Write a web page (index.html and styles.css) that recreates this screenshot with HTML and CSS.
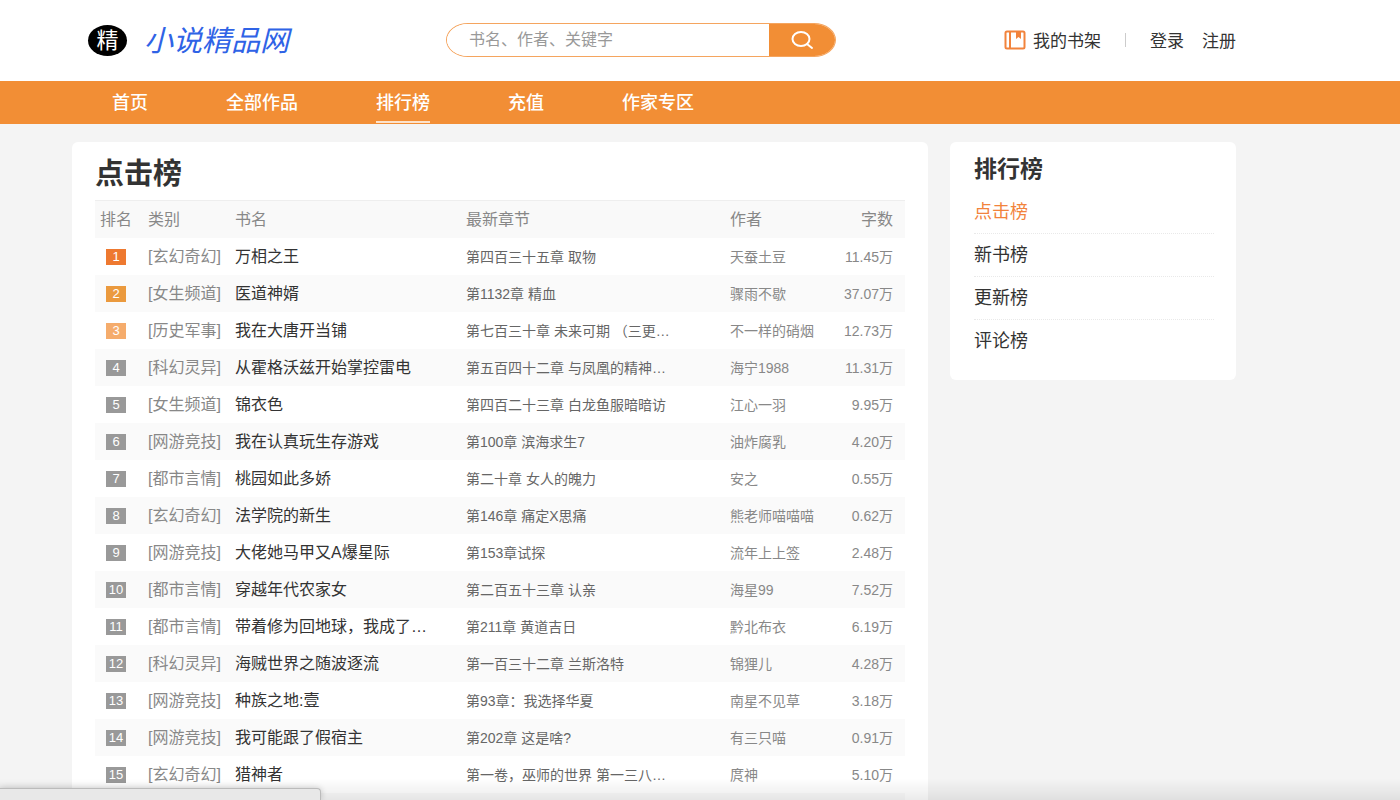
FILE: index.html
```html
<!DOCTYPE html>
<html lang="zh-CN">
<head>
    <meta charset="utf-8">
    <title>点击榜 - 小说精品网</title>
    <link rel="stylesheet" href="styles.css">
</head>
<body>
    <header class="header wrap">
        <a class="logo" href="#">
            <span class="logo-mark">精</span>
            <span class="logo-name">小说精品网</span>
        </a>
        <form class="search">
            <input type="text" name="keyword" placeholder="书名、作者、关键字" aria-label="书名、作者、关键字">
            <button type="submit" aria-label="搜索">
                <svg width="24" height="20" viewBox="0 0 24 20" fill="none" stroke="#fff" stroke-width="2" stroke-linecap="round">
                    <ellipse cx="11" cy="9" rx="8.5" ry="7"/>
                    <path d="M17 14l5 4"/>
                </svg>
            </button>
        </form>
        <div class="user">
            <a class="shelf" href="#">
                <svg width="22" height="20" viewBox="0 0 22 20">
                    <rect x="1.500" y="1.500" width="19" height="17" rx="1.500" fill="none" stroke="#f2833c" stroke-width="2"/>
                    <path d="M6 2v16" stroke="#f2833c" stroke-width="2"/>
                    <path d="M12 1h5v8l-2.500-2-2.500 2z" fill="#f2833c"/>
                </svg>
                我的书架
            </a>
            <span class="line"></span>
            <a href="#">登录</a>
            <a href="#">注册</a>
        </div>
    </header>

    <nav class="nav">
        <div class="nav-list wrap">
            <a href="#">首页</a>
            <a href="#">全部作品</a>
            <a class="on" href="#">排行榜</a>
            <a href="#">充值</a>
            <a href="#">作家专区</a>
        </div>
    </nav>

    <main class="content wrap">
        <section class="card rank">
            <h1>点击榜</h1>
            <table>
                <thead>
                    <tr>
                        <th class="num">排名</th>
                        <th class="cat">类别</th>
                        <th class="name">书名</th>
                        <th class="chapter">最新章节</th>
                        <th class="author">作者</th>
                        <th class="words">字数</th>
                    </tr>
                </thead>
                <tbody>
                    <tr><td class="num"><i class="n1">1</i></td><td class="cat"><a href="#">[玄幻奇幻]</a></td><td class="name"><a href="#">万相之王</a></td><td class="chapter"><a href="#">第四百三十五章 取物</a></td><td class="author"><a href="#">天蚕土豆</a></td><td class="words">11.45万</td></tr>
                    <tr><td class="num"><i class="n2">2</i></td><td class="cat"><a href="#">[女生频道]</a></td><td class="name"><a href="#">医道神婿</a></td><td class="chapter"><a href="#">第1132章 精血</a></td><td class="author"><a href="#">骤雨不歇</a></td><td class="words">37.07万</td></tr>
                    <tr><td class="num"><i class="n3">3</i></td><td class="cat"><a href="#">[历史军事]</a></td><td class="name"><a href="#">我在大唐开当铺</a></td><td class="chapter"><a href="#">第七百三十章 未来可期 （三更…</a></td><td class="author"><a href="#">不一样的硝烟</a></td><td class="words">12.73万</td></tr>
                    <tr><td class="num"><i>4</i></td><td class="cat"><a href="#">[科幻灵异]</a></td><td class="name"><a href="#">从霍格沃兹开始掌控雷电</a></td><td class="chapter"><a href="#">第五百四十二章 与凤凰的精神…</a></td><td class="author"><a href="#">海宁1988</a></td><td class="words">11.31万</td></tr>
                    <tr><td class="num"><i>5</i></td><td class="cat"><a href="#">[女生频道]</a></td><td class="name"><a href="#">锦衣色</a></td><td class="chapter"><a href="#">第四百二十三章 白龙鱼服暗暗访</a></td><td class="author"><a href="#">江心一羽</a></td><td class="words">9.95万</td></tr>
                    <tr><td class="num"><i>6</i></td><td class="cat"><a href="#">[网游竞技]</a></td><td class="name"><a href="#">我在认真玩生存游戏</a></td><td class="chapter"><a href="#">第100章 滨海求生7</a></td><td class="author"><a href="#">油炸腐乳</a></td><td class="words">4.20万</td></tr>
                    <tr><td class="num"><i>7</i></td><td class="cat"><a href="#">[都市言情]</a></td><td class="name"><a href="#">桃园如此多娇</a></td><td class="chapter"><a href="#">第二十章 女人的魄力</a></td><td class="author"><a href="#">安之</a></td><td class="words">0.55万</td></tr>
                    <tr><td class="num"><i>8</i></td><td class="cat"><a href="#">[玄幻奇幻]</a></td><td class="name"><a href="#">法学院的新生</a></td><td class="chapter"><a href="#">第146章 痛定X思痛</a></td><td class="author"><a href="#">熊老师喵喵喵</a></td><td class="words">0.62万</td></tr>
                    <tr><td class="num"><i>9</i></td><td class="cat"><a href="#">[网游竞技]</a></td><td class="name"><a href="#">大佬她马甲又A爆星际</a></td><td class="chapter"><a href="#">第153章试探</a></td><td class="author"><a href="#">流年上上签</a></td><td class="words">2.48万</td></tr>
                    <tr><td class="num"><i>10</i></td><td class="cat"><a href="#">[都市言情]</a></td><td class="name"><a href="#">穿越年代农家女</a></td><td class="chapter"><a href="#">第二百五十三章 认亲</a></td><td class="author"><a href="#">海星99</a></td><td class="words">7.52万</td></tr>
                    <tr><td class="num"><i>11</i></td><td class="cat"><a href="#">[都市言情]</a></td><td class="name"><a href="#">带着修为回地球，我成了…</a></td><td class="chapter"><a href="#">第211章 黄道吉日</a></td><td class="author"><a href="#">黔北布衣</a></td><td class="words">6.19万</td></tr>
                    <tr><td class="num"><i>12</i></td><td class="cat"><a href="#">[科幻灵异]</a></td><td class="name"><a href="#">海贼世界之随波逐流</a></td><td class="chapter"><a href="#">第一百三十二章 兰斯洛特</a></td><td class="author"><a href="#">锦狸儿</a></td><td class="words">4.28万</td></tr>
                    <tr><td class="num"><i>13</i></td><td class="cat"><a href="#">[网游竞技]</a></td><td class="name"><a href="#">种族之地:壹</a></td><td class="chapter"><a href="#">第93章：我选择华夏</a></td><td class="author"><a href="#">南星不见草</a></td><td class="words">3.18万</td></tr>
                    <tr><td class="num"><i>14</i></td><td class="cat"><a href="#">[网游竞技]</a></td><td class="name"><a href="#">我可能跟了假宿主</a></td><td class="chapter"><a href="#">第202章 这是啥?</a></td><td class="author"><a href="#">有三只喵</a></td><td class="words">0.91万</td></tr>
                    <tr><td class="num"><i>15</i></td><td class="cat"><a href="#">[玄幻奇幻]</a></td><td class="name"><a href="#">猎神者</a></td><td class="chapter"><a href="#">第一卷，巫师的世界 第一三八…</a></td><td class="author"><a href="#">庹神</a></td><td class="words">5.10万</td></tr>
                    <tr><td colspan="6"></td></tr>
                </tbody>
            </table>
        </section>

        <aside class="card side">
            <h2>排行榜</h2>
            <ul>
                <li><a class="on" href="#">点击榜</a></li>
                <li><a href="#">新书榜</a></li>
                <li><a href="#">更新榜</a></li>
                <li><a href="#">评论榜</a></li>
            </ul>
        </aside>
    </main>

    <div class="bottom-fade"></div>
    <div class="status-bar"></div>
</body>
</html>
```

FILE: styles.css
```css
* {
    box-sizing: border-box;
}

body {
    margin: 0;
    height: 100vh;
    overflow: hidden;
    background: #f4f4f4;
    color: #333;
    font-family: "Liberation Sans", "Noto Sans CJK SC", sans-serif;
    font-size: 16px;
}

a {
    color: inherit;
    text-decoration: none;
}

h1, h2, ul {
    margin: 0;
    padding: 0;
}

.wrap {
    padding-left: 72px;
    padding-right: 164px;
}

/* header */
.header {
    display: flex;
    align-items: center;
    height: 81px;
    padding-bottom: 2px;
    background: #fff;
}

.logo {
    display: flex;
    align-items: center;
    gap: 17px;
    width: 374px;
    padding: 2px 0 0 16px;
}

.logo-mark {
    width: 39px;
    height: 31px;
    border-radius: 50%;
    background: #000;
    color: #fff;
    font-size: 22px;
    line-height: 31px;
    text-align: center;
}

.logo-name {
    color: #2f63e6;
    font-size: 29px;
    font-style: italic;
    line-height: 32px;
}

.search {
    display: flex;
    width: 390px;
    height: 34px;
    border: 1px solid #f5a55f;
    border-radius: 22px / 17px;
    overflow: hidden;
}

.search input {
    flex: 1;
    min-width: 0;
    padding: 0 22px;
    border: 0;
    outline: 0;
    font: inherit;
}

.search input::placeholder {
    color: #999;
}

.search button {
    display: flex;
    align-items: center;
    justify-content: center;
    width: 66px;
    padding: 0;
    border: 0;
    background: #f28e35;
}

.user {
    display: flex;
    align-items: center;
    gap: 18px;
    margin-left: auto;
    font-size: 17px;
}

.shelf {
    display: flex;
    align-items: center;
    gap: 7px;
}

.line {
    width: 1px;
    height: 14px;
    margin: 0 6px;
    background: #ccc;
}

/* nav */
.nav {
    background: #f28e35;
}

.nav-list {
    display: flex;
    gap: 78px;
    height: 43px;
}

.nav-list a {
    height: 42px;
    color: #fff;
    font-size: 18px;
    font-weight: 500;
    line-height: 45px;
}

.nav-list a:first-child {
    margin-left: 40px;
}

.nav-list .on {
    border-bottom: 2px solid #fce3cd;
}

/* content */
.content {
    display: flex;
    align-items: flex-start;
    gap: 22px;
    padding-top: 18px;
}

.card {
    border-radius: 6px;
    background: #fff;
}

.rank {
    flex: 1;
    padding: 6px 23px 24px;
}

.rank h1 {
    font-size: 29px;
    line-height: 52px;
}

.rank table {
    width: 100%;
    border-top: 1px solid #eee;
    border-spacing: 0;
    table-layout: fixed;
}

.rank th,
.rank td {
    height: 37px;
    padding: 0 0 0 11px;
    line-height: 20px;
    text-align: left;
    white-space: nowrap;
}

.rank th {
    background: #f9f9f9;
    color: #888;
    font-weight: normal;
}

.rank tbody tr:nth-child(even) {
    background: #fafafa;
}

.rank .num {
    width: 42px;
    padding: 0;
    text-align: center;
}

.rank .cat {
    width: 87px;
    color: #888;
}

.rank .name {
    width: 231px;
}

.rank .chapter {
    width: 264px;
}

.rank .author {
    width: 106px;
}

.rank .words {
    padding: 0 12px 0 0;
    text-align: right;
}

.rank td.chapter {
    color: #666;
    font-size: 14px;
}

.rank td.author,
.rank td.words {
    color: #888;
    font-size: 14px;
}

.num i {
    display: block;
    width: 20px;
    margin: 0 auto;
    background: #999;
    color: #fff;
    font-size: 13px;
    font-style: normal;
    line-height: 16px;
}

.num .n1 {
    background: #ee7930;
}

.num .n2 {
    background: #eb9a3e;
}

.num .n3 {
    background: #f5ac6c;
}

/* sidebar */
.side {
    width: 286px;
    padding: 9px 22px 18px 24px;
}

.side h2 {
    margin-bottom: 4px;
    font-size: 23px;
    line-height: 36px;
}

.side ul {
    list-style: none;
}

.side li {
    border-bottom: 1px dotted #e9e9e9;
    font-size: 18px;
    line-height: 42px;
}

.side li:last-child {
    border-bottom: 0;
}

.side .on {
    color: #f2833c;
}

/* bottom of the window */
.bottom-fade {
    position: fixed;
    left: 0;
    right: 0;
    bottom: 0;
    height: 22px;
    background: linear-gradient(rgba(0, 0, 0, 0), rgba(0, 0, 0, 0.08));
}

.status-bar {
    position: fixed;
    left: 0;
    bottom: 0;
    width: 321px;
    height: 12px;
    border: 1px solid #bbb;
    border-width: 1px 1px 0 0;
    border-radius: 0 4px 0 0;
    background: #e8e8e8;
    box-shadow: 0 0 6px rgba(0, 0, 0, 0.2);
}
```
